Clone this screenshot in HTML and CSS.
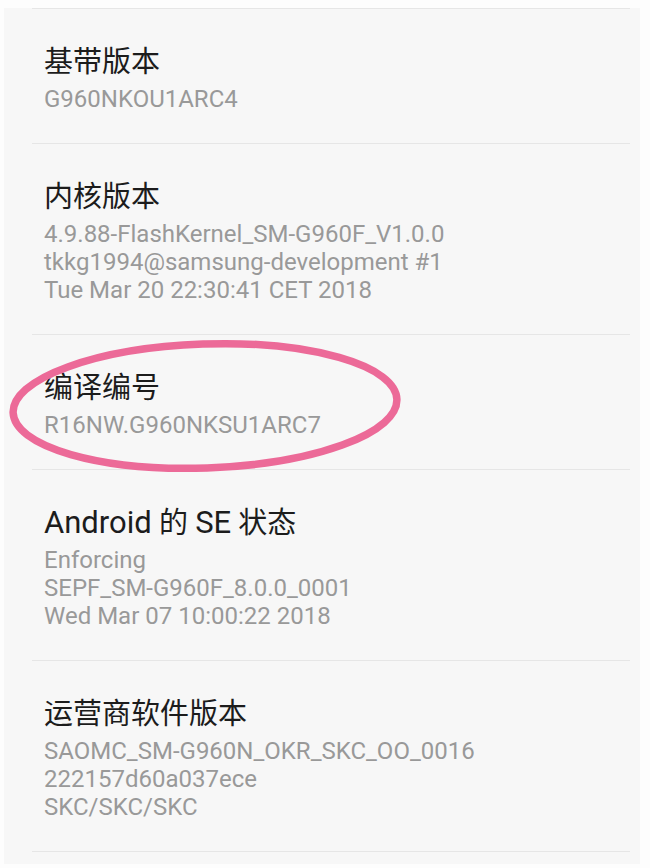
FILE: index.html
```html
<!DOCTYPE html>
<html lang="zh">
<head>
<meta charset="utf-8">
<link rel="stylesheet" href="styles.css">
</head>
<body>
<div class="page">
  <div class="card">
    <div class="divider"></div>
    <div class="row">
      <div class="title">基带版本</div>
      <div class="sub">G960NKOU1ARC4</div>
    </div>
    <div class="divider"></div>
    <div class="row">
      <div class="title">内核版本</div>
      <div class="sub">4.9.88-FlashKernel_SM-G960F_V1.0.0</div>
      <div class="sub">tkkg1994@samsung-development #1</div>
      <div class="sub">Tue Mar 20 22:30:41 CET 2018</div>
    </div>
    <div class="divider"></div>
    <div class="row">
      <div class="title">编译编号</div>
      <div class="sub">R16NW.G960NKSU1ARC7</div>
    </div>
    <div class="divider"></div>
    <div class="row">
      <div class="title"><span class="lat">Android</span> 的 <span class="lat">SE</span> 状态</div>
      <div class="sub">Enforcing</div>
      <div class="sub">SEPF_SM-G960F_8.0.0_0001</div>
      <div class="sub">Wed Mar 07 10:00:22 2018</div>
    </div>
    <div class="divider"></div>
    <div class="row">
      <div class="title">运营商软件版本</div>
      <div class="sub">SAOMC_SM-G960N_OKR_SKC_OO_0016</div>
      <div class="sub">222157d60a037ece</div>
      <div class="sub">SKC/SKC/SKC</div>
    </div>
    <div class="divider"></div>
  </div>
  <svg class="mark" width="650" height="868" viewBox="0 0 650 868">
    <ellipse cx="205" cy="406" rx="192" ry="62" transform="rotate(-2 205 406)" fill="none" stroke="#ec6a98" stroke-width="7.5"/>
  </svg>
</div>
</body>
</html>
```
FILE: styles.css
```css
html, body {
  margin: 0;
  padding: 0;
  background: #fdfdfd;
}
.page {
  position: relative;
  width: 650px;
  height: 868px;
  overflow: hidden;
  padding-top: 8px;
  box-sizing: border-box;
}
.card {
  margin-left: 4px;
  width: 636px;
  background: #f7f7f7;
  padding-bottom: 12px;
}
.divider {
  height: 1px;
  margin: 0 10px 0 28px;
  background: #e6e6e6;
}
.row {
  padding: 30px 40px 30px 40px;
}
.title {
  font-family: Roboto, "Noto Sans CJK SC", sans-serif;
  font-size: 29px;
  line-height: 46px;
  color: #1c1c1c;
}
.lat {
  font-size: 31px;
}
.sub {
  font-family: Roboto, "Noto Sans CJK SC", sans-serif;
  font-size: 24px;
  line-height: 28px;
  color: #999999;
}
.mark {
  position: absolute;
  left: 0;
  top: 0;
  pointer-events: none;
}
```
